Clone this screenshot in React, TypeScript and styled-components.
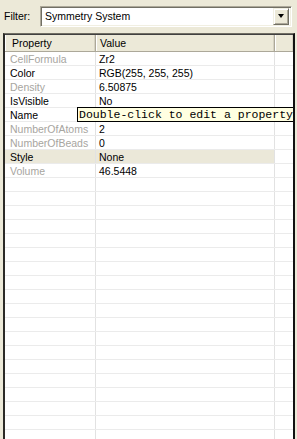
import styled, { createGlobalStyle } from 'styled-components';

const GlobalStyle = createGlobalStyle`
  html, body {
    margin: 0;
    padding: 0;
    height: 439px;
    overflow: hidden;
    background: #ece9d8;
  }
  body {
    font-family: 'Liberation Sans', Arial, sans-serif;
    font-size: 10.5px;
    color: #000;
  }
`;

const StyledPanel = styled.div`
  width: 297px;
  height: 439px;
  display: flex;
  flex-direction: column;
  overflow: hidden;
`;

const StyledFilterBar = styled.div`
  flex-shrink: 0;
  height: 33px;
  display: flex;
  align-items: center;
  padding: 0 5px 1px 4px;
  box-sizing: border-box;

  label {
    width: 36px;
  }
`;

const StyledCombo = styled.div`
  flex: 1;
  height: 21px;
  box-sizing: border-box;
  display: flex;
  align-items: center;
  background: #fff;
  border-top: 1px solid #aca899;
  border-left: 1px solid #aca899;
  border-right: 1px solid #fff;
  border-bottom: 1px solid #fff;
  box-shadow: inset 1px 1px 0 #716f64, inset -1px -1px 0 #f1efe2;
  padding: 2px 2px 2px 4px;

  span {
    flex: 1;
  }
`;

const StyledDropButton = styled.div`
  width: 16px;
  height: 17px;
  box-sizing: border-box;
  background: #ece9d8;
  border-top: 1px solid #f1efe2;
  border-left: 1px solid #f1efe2;
  border-right: 1px solid #716f64;
  border-bottom: 1px solid #716f64;
  box-shadow: inset 1px 1px 0 #fff, inset -1px -1px 0 #aca899;
  display: flex;
  align-items: center;
  justify-content: center;

  &::after {
    content: '';
    border-left: 3.5px solid transparent;
    border-right: 3.5px solid transparent;
    border-top: 4px solid #000;
  }
`;

const StyledGrid = styled.div`
  position: relative;
  flex: 1;
  min-height: 0;
  overflow: hidden;
  margin: 0 2px 0 3px;
  background: #fff;
  border-top: 1px solid #716f64;
  border-left: 2px solid #2b2a26;
  border-right: 2px solid #111;
  box-shadow: inset 0 1px 0 #404040;
`;

const StyledHeader = styled.div`
  display: grid;
  grid-template-columns: 91px 179px 1fr;
  height: 17px;
  margin-top: 1px;
  background: #ece9d8;
  border-bottom: 1px solid #aca899;
  box-sizing: border-box;
`;

const StyledHeadCell = styled.div<{ $pad: number }>`
  display: flex;
  align-items: center;
  padding-left: ${(p) => p.$pad}px;
  border-right: 1px solid #aca899;
  box-shadow: inset -1px 0 0 #d6d2c2, inset 1px 0 0 #fff;

  &:last-child {
    border-right: none;
  }
`;

const StyledRow = styled.div<{ $selected?: boolean }>`
  display: grid;
  grid-template-columns: 91px 179px 1fr;
  height: 14px;
  box-sizing: border-box;
  border-bottom: 1px solid #ebebeb;

  div {
    display: flex;
    align-items: center;
    padding-top: 1px;
    white-space: nowrap;
    overflow: hidden;
    border-right: 1px solid #e2e2e2;
    background: ${(p) => (p.$selected ? '#ebe8d9' : 'transparent')};
  }

  div:last-child {
    border-right: none;
    background: transparent;
  }
`;

const StyledName = styled.div<{ $muted?: boolean }>`
  padding-left: 5px;
  color: ${(p) => (p.$muted ? '#a7a5a0' : '#000')};
`;

const StyledValue = styled.div`
  padding-left: 3px;
`;

const StyledTooltip = styled.div`
  position: absolute;
  left: 72px;
  top: 73px;
  height: 15px;
  box-sizing: border-box;
  padding: 0 1px 0 1px;
  background: #ffffe1;
  border: 1px solid #000;
  font-family: 'Liberation Mono', 'Courier New', monospace;
  font-size: 11.5px;
  line-height: 13px;
  white-space: nowrap;
`;

const properties = [
  { name: 'CellFormula', value: 'Zr2', muted: true },
  { name: 'Color', value: 'RGB(255, 255, 255)' },
  { name: 'Density', value: '6.50875', muted: true },
  { name: 'IsVisible', value: 'No' },
  { name: 'Name', value: '' },
  { name: 'NumberOfAtoms', value: '2', muted: true },
  { name: 'NumberOfBeads', value: '0', muted: true },
  { name: 'Style', value: 'None', selected: true },
  { name: 'Volume', value: '46.5448', muted: true },
];

const emptyRows = Array.from({ length: 22 });

export default function App() {
  return (
    <StyledPanel>
      <GlobalStyle />
      <StyledFilterBar>
        <label>Filter:</label>
        <StyledCombo>
          <span>Symmetry System</span>
          <StyledDropButton />
        </StyledCombo>
      </StyledFilterBar>
      <StyledGrid>
        <StyledHeader>
          <StyledHeadCell $pad={7}>Property</StyledHeadCell>
          <StyledHeadCell $pad={4}>Value</StyledHeadCell>
          <StyledHeadCell $pad={0} />
        </StyledHeader>
        {properties.map((p) => (
          <StyledRow key={p.name} $selected={p.selected}>
            <StyledName $muted={p.muted}>{p.name}</StyledName>
            <StyledValue>{p.value}</StyledValue>
            <div />
          </StyledRow>
        ))}
        {emptyRows.map((_, i) => (
          <StyledRow key={i}>
            <div />
            <div />
            <div />
          </StyledRow>
        ))}
        <StyledTooltip>Double-click to edit a property</StyledTooltip>
      </StyledGrid>
    </StyledPanel>
  );
}
